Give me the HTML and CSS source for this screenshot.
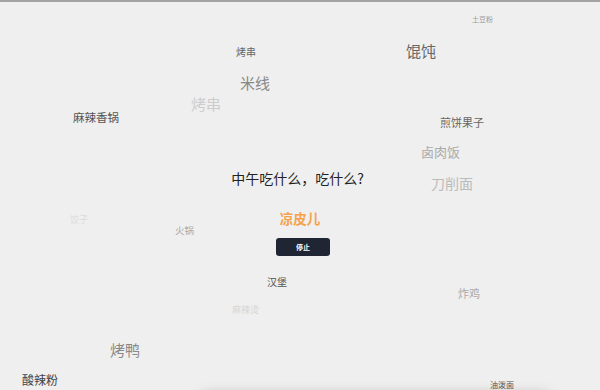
FILE: index.html
```html
<!DOCTYPE html>
<html lang="zh-CN">
  <head>
    <meta charset="UTF-8" />
    <meta name="viewport" content="width=device-width, initial-scale=1.0" />
    <title>中午吃什么</title>
    <link rel="stylesheet" href="styles.css">
  </head>
  <body>
    <div class="stage">
      <span class="word w1">土豆粉</span>
      <span class="word w2">烤串</span>
      <span class="word w3">馄饨</span>
      <span class="word w4">米线</span>
      <span class="word w5">烤串</span>
      <span class="word w6">麻辣香锅</span>
      <span class="word w7">煎饼果子</span>
      <span class="word w8">卤肉饭</span>
      <span class="word w9">刀削面</span>
      <span class="word w10">饺子</span>
      <span class="word w11">火锅</span>
      <span class="word w12">汉堡</span>
      <span class="word w13">炸鸡</span>
      <span class="word w14">麻辣烫</span>
      <span class="word w15">烤鸭</span>
      <span class="word w16">酸辣粉</span>
      <span class="word w17">油泼面</span>

      <div class="main">
        <h1 class="title">中午吃什么，吃什么?</h1>
        <div class="result">凉皮儿</div>
        <button class="btn">停止</button>
      </div>

      <div class="dock"></div>
    </div>
  </body>
</html>
```

FILE: styles.css
```css
* {
  margin: 0;
  padding: 0;
  box-sizing: border-box;
}
body {
  background: #efefef;
  font-family: "Noto Sans CJK SC", "Noto Sans", sans-serif;
  overflow: hidden;
}
.stage {
  position: relative;
  width: 600px;
  height: 390px;
  border-top: 2px solid #a3a3a3;
  overflow: hidden;
}
.main {
  display: flex;
  flex-direction: column;
  align-items: center;
  padding-top: 166px;
}
.title {
  margin-right: 5px;
  font-size: 14px;
  font-weight: 400;
  line-height: 20px;
  color: #222;
}
.result {
  margin-top: 20px;
  font-size: 13.5px;
  font-weight: 700;
  line-height: 20px;
  color: #f5a24b;
}
.btn {
  margin-top: 10px;
  margin-left: 6px;
  width: 54px;
  height: 18px;
  border: none;
  border-radius: 3px;
  background: #1f2533;
  color: #fff;
  font-family: inherit;
  font-size: 7px;
  font-weight: 700;
}

.word {
  position: absolute;
  line-height: 1;
  white-space: nowrap;
}
.w1 { left: 472px; top: 14px; font-size: 7px; color: #9a9a9a; }
.w2 { left: 236px; top: 45px; font-size: 10px; color: #666; }
.w3 { left: 406px; top: 41px; font-size: 15px; color: #666; }
.w4 { left: 240px; top: 73px; font-size: 15px; color: #888; }
.w5 { left: 191px; top: 94px; font-size: 15px; color: #cdcdcd; }
.w6 { left: 73px; top: 110px; font-size: 11.5px; color: #555; }
.w7 { left: 440px; top: 115px; font-size: 11px; color: #666; }
.w8 { left: 421px; top: 143px; font-size: 13px; color: #aaa; }
.w9 { left: 431px; top: 174px; font-size: 14px; color: #bbb; }
.w10 { left: 70px; top: 213px; font-size: 9px; color: #dcdcdc; }
.w11 { left: 175px; top: 224px; font-size: 9.5px; color: #aaa; }
.w12 { left: 267px; top: 275px; font-size: 10px; color: #555; }
.w13 { left: 458px; top: 286px; font-size: 11px; color: #aaa; }
.w14 { left: 232px; top: 303px; font-size: 9px; color: #d6d6d6; }
.w15 { left: 110px; top: 340px; font-size: 15px; color: #888; }
.w16 { left: 22px; top: 372px; font-size: 12px; color: #444; }
.w17 { left: 490px; top: 379px; font-size: 8px; color: #555; }

.dock {
  position: absolute;
  left: 200px;
  top: 394px;
  width: 350px;
  height: 40px;
  border-radius: 8px;
  background: #e6e6e6;
  box-shadow: 0 0 14px rgba(0, 0, 0, 0.35);
}
```
